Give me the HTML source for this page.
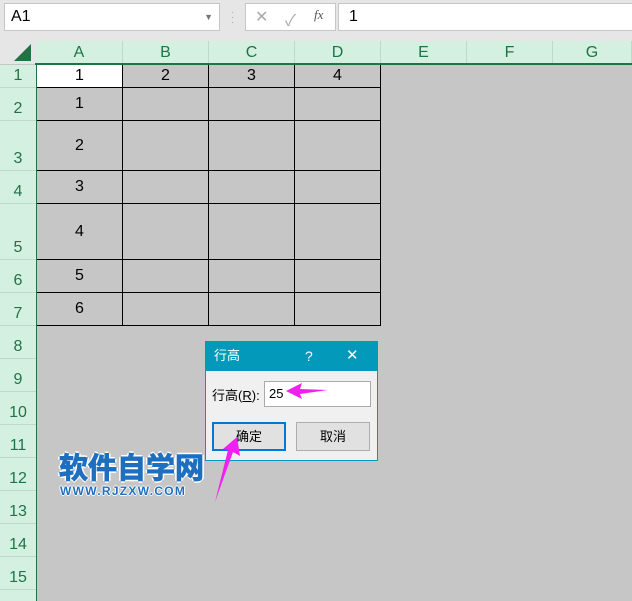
<!DOCTYPE html>
<html><head><meta charset="utf-8"><style>
*{margin:0;padding:0;box-sizing:border-box}
html,body{width:632px;height:601px;overflow:hidden}
body{background:#c6c6c6;font-family:"Liberation Sans","Noto Sans CJK SC",sans-serif;position:relative}
.a{position:absolute}
.top{left:0;top:0;width:632px;height:41px;background:#e6e6e6}
.box{background:#fff;border:1px solid #c6c6c6}
.ch{top:41px;height:23px;background:#d3f0e0;color:#217346;font-size:16px;text-align:center;line-height:23px;border-right:1px solid #bfd8c8}
.rh{left:0;width:36px;background:#d3f0e0;color:#217346;font-size:16px;text-align:center;border-bottom:1px solid #bfd8c8;display:flex;align-items:flex-end;justify-content:center;padding-bottom:2px}
.c{font-size:16px;text-align:center;color:#000;display:flex;align-items:center;justify-content:center}
.hl{background:#000;height:1px}
.vl{background:#000;width:1px}
</style></head><body>
<div class="a top"></div>
<div class="a box" style="left:4px;top:3px;width:216px;height:28px;font-size:16px;line-height:26px;padding-left:6px">A1<span class="a" style="right:6px;top:0;font-size:9px;color:#777">▼</span></div>
<div class="a" style="left:231px;top:10px;color:#aaa;font-size:10px;line-height:5px">·<br>·<br>·</div>
<div class="a box" style="left:245px;top:3px;width:91px;height:28px"></div>
<div class="a" style="left:255px;top:7px;color:#aaa;font-size:16px">✕</div>
<div class="a" style="left:285px;top:7px;color:#aaa;font-size:16px">✓</div>
<div class="a" style="left:314px;top:7px;color:#555;font-size:13px;font-style:italic;font-family:'Liberation Serif',serif">fx</div>
<div class="a box" style="left:338px;top:3px;width:300px;height:28px;font-size:16px;line-height:26px;padding-left:10px">1</div>
<div class="a" style="left:0;top:41px;width:36px;height:23px;background:#e6e6e6"></div>
<div class="a" style="left:14px;top:44px;width:0;height:0;border-left:17px solid transparent;border-bottom:17px solid #217346"></div>
<div class="a ch" style="left:36px;width:87px">A</div>
<div class="a ch" style="left:123px;width:86px">B</div>
<div class="a ch" style="left:209px;width:86px">C</div>
<div class="a ch" style="left:295px;width:86px">D</div>
<div class="a ch" style="left:381px;width:86px">E</div>
<div class="a ch" style="left:467px;width:86px">F</div>
<div class="a ch" style="left:553px;width:79px">G</div>
<div class="a" style="left:36px;top:63px;width:596px;height:2px;background:#217346"></div>
<div class="a" style="left:35px;top:63px;width:2px;height:538px;background:#217346"></div>
<div class="a rh" style="top:65px;height:23px">1</div>
<div class="a rh" style="top:88px;height:33px">2</div>
<div class="a rh" style="top:121px;height:50px">3</div>
<div class="a rh" style="top:171px;height:33px">4</div>
<div class="a rh" style="top:204px;height:56px">5</div>
<div class="a rh" style="top:260px;height:33px">6</div>
<div class="a rh" style="top:293px;height:33px">7</div>
<div class="a rh" style="top:326px;height:33px">8</div>
<div class="a rh" style="top:359px;height:33px">9</div>
<div class="a rh" style="top:392px;height:33px">10</div>
<div class="a rh" style="top:425px;height:33px">11</div>
<div class="a rh" style="top:458px;height:33px">12</div>
<div class="a rh" style="top:491px;height:33px">13</div>
<div class="a rh" style="top:524px;height:33px">14</div>
<div class="a rh" style="top:557px;height:33px">15</div>
<div class="a rh" style="top:590px;height:11px;border-bottom:none"></div>
<div class="a" style="left:37px;top:65px;width:85px;height:22px;background:#fff"></div>
<div class="a c" style="left:37px;top:65px;width:85px;height:22px">1</div>
<div class="a c" style="left:123px;top:65px;width:85px;height:22px">2</div>
<div class="a c" style="left:209px;top:65px;width:85px;height:22px">3</div>
<div class="a c" style="left:295px;top:65px;width:85px;height:22px">4</div>
<div class="a c" style="left:37px;top:88px;width:85px;height:32px">1</div>
<div class="a c" style="left:37px;top:121px;width:85px;height:49px">2</div>
<div class="a c" style="left:37px;top:171px;width:85px;height:32px">3</div>
<div class="a c" style="left:37px;top:204px;width:85px;height:55px">4</div>
<div class="a c" style="left:37px;top:260px;width:85px;height:32px">5</div>
<div class="a c" style="left:37px;top:293px;width:85px;height:32px">6</div>
<div class="a hl" style="left:37px;top:87px;width:344px"></div>
<div class="a hl" style="left:37px;top:120px;width:344px"></div>
<div class="a hl" style="left:37px;top:170px;width:344px"></div>
<div class="a hl" style="left:37px;top:203px;width:344px"></div>
<div class="a hl" style="left:37px;top:259px;width:344px"></div>
<div class="a hl" style="left:37px;top:292px;width:344px"></div>
<div class="a hl" style="left:37px;top:325px;width:344px"></div>
<div class="a vl" style="left:122px;top:65px;height:261px"></div>
<div class="a vl" style="left:208px;top:65px;height:261px"></div>
<div class="a vl" style="left:294px;top:65px;height:261px"></div>
<div class="a vl" style="left:380px;top:65px;height:261px"></div>
<!-- dialog -->
<div class="a" style="left:205px;top:341px;width:173px;height:120px;background:#f0f0f0;border:1px solid #0399bb"></div>
<div class="a" style="left:205px;top:341px;width:173px;height:30px;background:#0399bb;color:#fff;font-size:13px;line-height:30px;padding-left:9px">行高<span class="a" style="left:100px;top:0;font-size:14px">?</span><span class="a" style="left:141px;top:0;font-size:15px;font-weight:300">✕</span></div>
<div class="a" style="left:212px;top:385px;font-size:13px">行高(<u>R</u>):</div>
<div class="a" style="left:264px;top:381px;width:107px;height:26px;background:#fff;border:1px solid #aaa;font-size:13px;line-height:24px;padding-left:4px">25</div>
<div class="a" style="left:212px;top:422px;width:74px;height:29px;background:#e1e1e1;border:2px solid #0078d7;font-size:13px;text-align:center;line-height:25px">确定</div>
<div class="a" style="left:296px;top:422px;width:74px;height:29px;background:#e1e1e1;border:1px solid #adadad;font-size:13px;text-align:center;line-height:27px">取消</div>
<div class="a" style="left:59px;top:452px;font-size:29px;font-weight:bold;color:#1f6fc0;letter-spacing:0px;-webkit-text-stroke:1px #1f6fc0;text-shadow:2px 0 #fff,-2px 0 #fff,0 2px #fff,0 -2px #fff;line-height:34px">软件自学网</div>
<div class="a" style="left:60px;top:484px;font-size:12px;font-weight:bold;color:#1f6fc0;letter-spacing:1.3px;text-shadow:1px 0 #fff,-1px 0 #fff,0 1px #fff,0 -1px #fff;line-height:14px">WWW.RJZXW.COM</div>
<svg class="a" style="left:0;top:0" width="632" height="601">
<polygon points="286,391 302,383 300,389 328,390 300,394 302,399" fill="#f020f0"/>
<polygon points="237,437 240,456 233,452 215,502 228,450 223,449" fill="#f020f0"/>
</svg>
</body></html>
